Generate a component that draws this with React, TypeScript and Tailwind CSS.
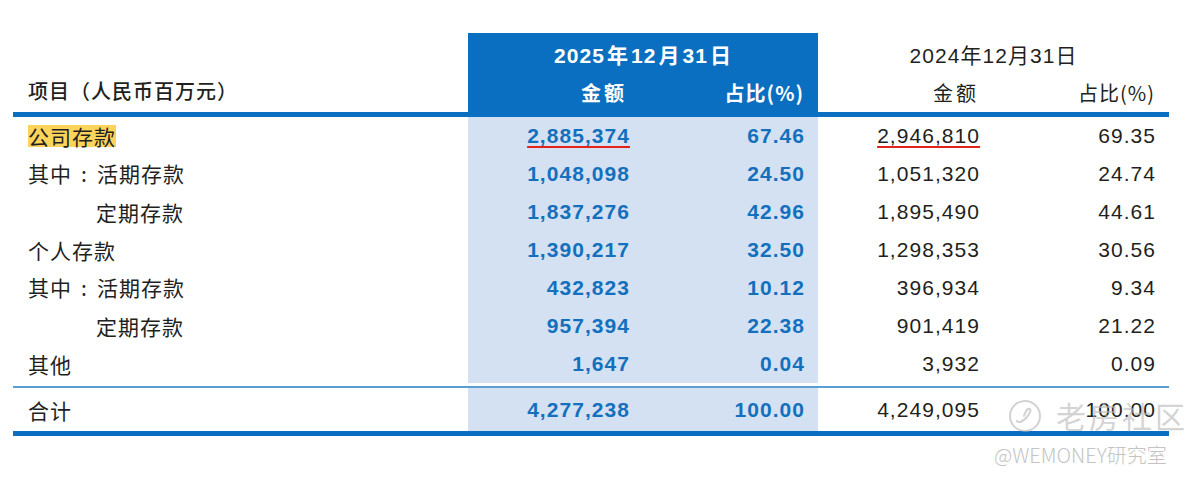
const rows = [
  { label: '公司存款', indent: false, hl: true, a: '2,885,374', p: '67.46', b: '2,946,810', q: '69.35' },
  { label: '其中：活期存款', indent: false, a: '1,048,098', p: '24.50', b: '1,051,320', q: '24.74' },
  { label: '定期存款', indent: true, a: '1,837,276', p: '42.96', b: '1,895,490', q: '44.61' },
  { label: '个人存款', indent: false, a: '1,390,217', p: '32.50', b: '1,298,353', q: '30.56' },
  { label: '其中：活期存款', indent: false, a: '432,823', p: '10.12', b: '396,934', q: '9.34' },
  { label: '定期存款', indent: true, a: '957,394', p: '22.38', b: '901,419', q: '21.22' },
  { label: '其他', indent: false, a: '1,647', p: '0.04', b: '3,932', q: '0.09' },
]

const cols = 'grid grid-cols-[455px_175px_175px_175px_176px]'
const cjk = "font-['Noto_Sans_CJK_SC',sans-serif]"
const num = "font-['Liberation_Sans','Noto_Sans_CJK_SC',sans-serif] tracking-[0.05em]"

function Label({ text, indent, hl }: { text: string; indent?: boolean; hl?: boolean }) {
  const parts = text.startsWith('其中：') ? ['其中', '：', text.slice(3)] : null
  return (
    <div className={`flex items-center pl-[15px] text-[21px] text-[#231f20] ${cjk} ${indent ? 'pl-[83px]' : ''}`}>
      {parts ? (
        <span className="flex items-center tracking-[1px]">
          <span>{parts[0]}</span>
          <span className="w-[25px] text-center">:</span>
          <span>{parts[2]}</span>
        </span>
      ) : (
        <span className={`tracking-[1px] leading-[22px] ${hl ? 'bg-[#fcd45a]' : ''}`}>{text}</span>
      )}
    </div>
  )
}

export default function App() {
  return (
    <div className="relative w-[1200px] h-[481px] bg-white overflow-hidden">
      <div className="ml-[13px] mt-[33px] w-[1156px]">
        {/* header */}
        <div className={`${cols} grid-rows-[40px_39px]`}>
          <div className="row-span-2 flex items-end pb-[6px] pl-[15px]">
            <span className={`text-[20px] font-medium text-[#231f20] tracking-[1px] ${cjk}`}>项目（人民币百万元）</span>
          </div>
          <div className="col-span-2 bg-[#0a6fc1] flex items-center justify-center pt-[4px]">
            <span className={`text-[21px] font-bold text-white ${num}`}>
              2025<span className={`${cjk} mx-[2px]`}>年</span>12<span className={`${cjk} mx-[2px]`}>月</span>31<span className={`${cjk} ml-[2px]`}>日</span>
            </span>
          </div>
          <div className="col-span-2 flex items-center justify-center pt-[4px]">
            <span className={`text-[21px] text-[#231f20] ${num}`}>
              2024<span className={cjk}>年</span>12<span className={cjk}>月</span>31<span className={cjk}>日</span>
            </span>
          </div>
          <div className={`bg-[#0a6fc1] flex items-center justify-end pr-[16px] text-[20px] font-bold text-white ${cjk}`}>
            <span className="tracking-[3px]">金额</span>
          </div>
          <div className={`bg-[#0a6fc1] flex items-center justify-end pr-[14px] text-[20px] font-bold text-white ${cjk}`}>
            <span className="tracking-[1px]">占比(%)</span>
          </div>
          <div className={`flex items-center justify-end pr-[14px] text-[20px] text-[#231f20] ${cjk}`}>
            <span className="tracking-[3px]">金额</span>
          </div>
          <div className={`flex items-center justify-end pr-[14px] text-[20px] text-[#231f20] ${cjk}`}>
            <span className="tracking-[1px]">占比(%)</span>
          </div>
        </div>
        <div className="h-[5px] bg-[#0a6fc1]" />

        {/* body */}
        {rows.map((r, i) => (
          <div key={i} className={`${cols} ${i === rows.length - 1 ? 'h-[41px] pb-[3px]' : 'h-[38px]'}`}>
            <Label text={r.label} indent={r.indent} hl={r.hl} />
            <div className={`bg-[#d3e1f3] flex items-center justify-end pr-[13px] text-[21px] font-bold text-[#1470bd] ${num}`}>
              <span className={i === 0 ? 'underline decoration-[#e3231b] decoration-2 underline-offset-[3px]' : ''}>{r.a}</span>
            </div>
            <div className={`bg-[#d3e1f3] flex items-center justify-end pr-[13px] text-[21px] font-bold text-[#1470bd] ${num}`}>
              {r.p}
            </div>
            <div className={`flex items-center justify-end pr-[13px] text-[21px] text-[#231f20] ${num}`}>
              <span className={i === 0 ? 'underline decoration-[#e3231b] decoration-2 underline-offset-[3px]' : ''}>{r.b}</span>
            </div>
            <div className={`flex items-center justify-end pr-[13px] text-[21px] text-[#231f20] ${num}`}>
              {r.q}
            </div>
          </div>
        ))}
        <div className="h-[2px] bg-[#5a9ed6]" />
        <div className={`${cols} h-[43px]`}>
          <Label text="合计" />
          <div className={`bg-[#d3e1f3] flex items-center justify-end pr-[13px] text-[21px] font-bold text-[#1470bd] ${num}`}>4,277,238</div>
          <div className={`bg-[#d3e1f3] flex items-center justify-end pr-[13px] text-[21px] font-bold text-[#1470bd] ${num}`}>100.00</div>
          <div className={`flex items-center justify-end pr-[13px] text-[21px] text-[#231f20] ${num}`}>4,249,095</div>
          <div className={`flex items-center justify-end pr-[13px] text-[21px] text-[#231f20] ${num}`}>100.00</div>
        </div>
        <div className="h-[5px] bg-[#0a6fc1]" />
      </div>

      {/* watermark */}
      <div className="absolute left-[1008px] top-[393px] flex items-center gap-[14px] opacity-60 pointer-events-none">
        <svg width="34" height="34" viewBox="0 0 34 34" fill="none" stroke="#b5b5b5" strokeWidth="2">
          <circle cx="17" cy="17" r="15" />
          <path d="M9 22c2 2 5 1 6-1M14 22c3-1 6-5 8-9 1-2 0-4-2-3-2 1-3 4-4 7" strokeLinecap="round" />
        </svg>
        <span className={`text-[30px] text-[#b8b8b8] tracking-[3px] ${cjk}`}>老房社区</span>
      </div>
      <div className={`absolute left-[994px] top-[440px] text-[20px] text-[#c4c4c4] ${cjk} font-light`}>
        @WEMONEY研究室
      </div>
    </div>
  )
}
